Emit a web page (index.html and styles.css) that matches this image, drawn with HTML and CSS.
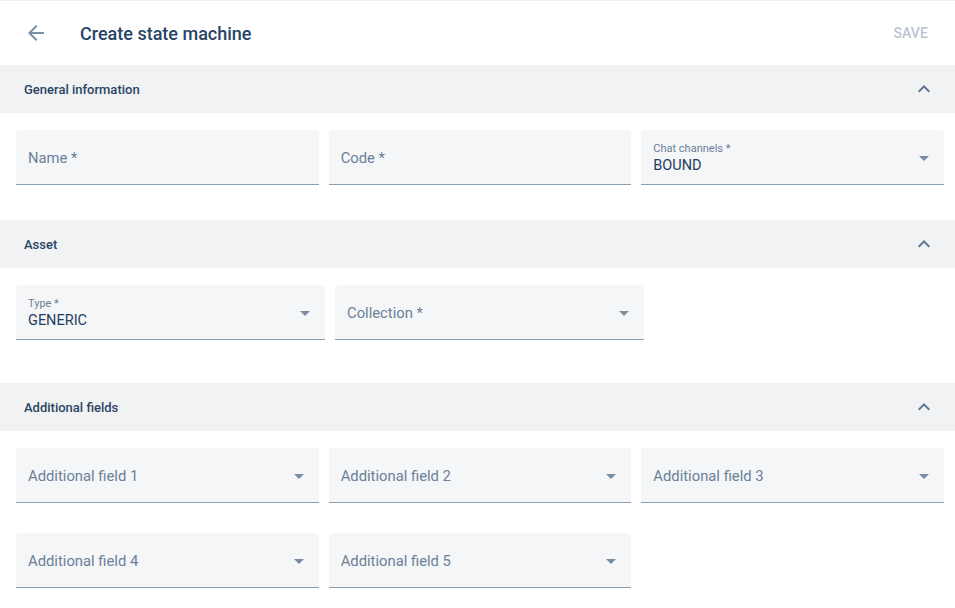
FILE: index.html
```html
<!DOCTYPE html>
<html>
<head>
<meta charset="utf-8">
<link rel="stylesheet" href="styles.css">
</head>
<body>
<div class="page">
  <header class="topbar">
    <button class="back" aria-label="Back">
      <svg viewBox="0 0 24 24" width="24" height="24"><path d="M20 11H7.83l5.59-5.59L12 4l-8 8 8 8 1.41-1.41L7.83 13H20v-2z" fill="currentColor"/></svg>
    </button>
    <h1 class="title">Create state machine</h1>
    <span class="save">SAVE</span>
  </header>

  <section class="section">
    <div class="section-head">
      <span>General information</span>
      <svg class="chev" viewBox="0 0 24 24" width="24" height="24"><path d="M12 8l-6 6 1.41 1.41L12 10.83l4.59 4.58L18 14z" fill="currentColor"/></svg>
    </div>
    <div class="grid grid3">
      <div class="field"><span class="ph">Name *</span></div>
      <div class="field"><span class="ph">Code *</span></div>
      <div class="field select filled">
        <div class="val"><span class="lbl">Chat channels *</span><span class="v">BOUND</span></div>
        <svg class="drop" viewBox="0 0 24 24" width="24" height="24"><path d="M7 10l5 5 5-5z" fill="currentColor"/></svg>
      </div>
    </div>
  </section>

  <section class="section">
    <div class="section-head">
      <span>Asset</span>
      <svg class="chev" viewBox="0 0 24 24" width="24" height="24"><path d="M12 8l-6 6 1.41 1.41L12 10.83l4.59 4.58L18 14z" fill="currentColor"/></svg>
    </div>
    <div class="grid grid-asset">
      <div class="field select filled">
        <div class="val"><span class="lbl">Type *</span><span class="v">GENERIC</span></div>
        <svg class="drop" viewBox="0 0 24 24" width="24" height="24"><path d="M7 10l5 5 5-5z" fill="currentColor"/></svg>
      </div>
      <div class="field select">
        <span class="ph">Collection *</span>
        <svg class="drop" viewBox="0 0 24 24" width="24" height="24"><path d="M7 10l5 5 5-5z" fill="currentColor"/></svg>
      </div>
    </div>
  </section>

  <section class="section">
    <div class="section-head">
      <span>Additional fields</span>
      <svg class="chev" viewBox="0 0 24 24" width="24" height="24"><path d="M12 8l-6 6 1.41 1.41L12 10.83l4.59 4.58L18 14z" fill="currentColor"/></svg>
    </div>
    <div class="grid grid3 rows">
      <div class="field select"><span class="ph">Additional field 1</span><svg class="drop" viewBox="0 0 24 24" width="24" height="24"><path d="M7 10l5 5 5-5z" fill="currentColor"/></svg></div>
      <div class="field select"><span class="ph">Additional field 2</span><svg class="drop" viewBox="0 0 24 24" width="24" height="24"><path d="M7 10l5 5 5-5z" fill="currentColor"/></svg></div>
      <div class="field select"><span class="ph">Additional field 3</span><svg class="drop" viewBox="0 0 24 24" width="24" height="24"><path d="M7 10l5 5 5-5z" fill="currentColor"/></svg></div>
      <div class="field select"><span class="ph">Additional field 4</span><svg class="drop" viewBox="0 0 24 24" width="24" height="24"><path d="M7 10l5 5 5-5z" fill="currentColor"/></svg></div>
      <div class="field select"><span class="ph">Additional field 5</span><svg class="drop" viewBox="0 0 24 24" width="24" height="24"><path d="M7 10l5 5 5-5z" fill="currentColor"/></svg></div>
    </div>
  </section>
</div>
</body>
</html>
```

FILE: styles.css
```css
* { box-sizing: border-box; }
html, body { margin: 0; padding: 0; background: #fff; }
body { font-family: Roboto, "Liberation Sans", sans-serif; color: #2b4462; }

.page { border-top: 1px solid #eceef1; }

.topbar {
  height: 64px;
  display: flex;
  align-items: center;
  padding: 0 27px 0 24px;
}
.back {
  border: 0; background: none; padding: 0; margin: 0;
  width: 24px; height: 24px; color: #7a8ea6;
  display: flex; cursor: pointer;
}
.title {
  margin: 0 0 0 32px;
  font-size: 18px;
  font-weight: 500;
  color: #274466;
  flex: 1;
}
.save {
  font-size: 14px;
  font-weight: 500;
  color: #b9c5d2;
  letter-spacing: 0.1px;
}

.section-head {
  height: 48px;
  background: #f1f2f4;
  display: flex;
  align-items: center;
  justify-content: space-between;
  padding: 0 19px 0 24px;
  font-size: 13px;
  font-weight: 500;
  color: #2b4462;
}
.chev { color: #5d7591; }

.grid {
  display: grid;
  column-gap: 10px;
  row-gap: 30px;
  padding: 17px 11px 35px 16px;
}
.grid3 { grid-template-columns: repeat(3, 1fr); }
.grid-asset { grid-template-columns: 309px 309px; padding-bottom: 43px; }
.rows { padding-bottom: 20px; }

.field {
  height: 55px;
  background: #f4f6f8;
  border-radius: 4px 4px 0 0;
  border-bottom: 1px solid #8ba0b7;
  display: flex;
  align-items: center;
  padding: 2px 8px 0 12px;
}
.ph {
  flex: 1;
  font-size: 14.8px;
  color: #6c8098;
}
.val { flex: 1; display: flex; flex-direction: column; padding-top: 2px; }
.lbl { font-size: 11px; color: #6a7f97; line-height: 14px; }
.v { font-size: 14.5px; color: #1f3d5e; line-height: 20px; }
.drop { color: #7a8ca1; flex: none; }
```
